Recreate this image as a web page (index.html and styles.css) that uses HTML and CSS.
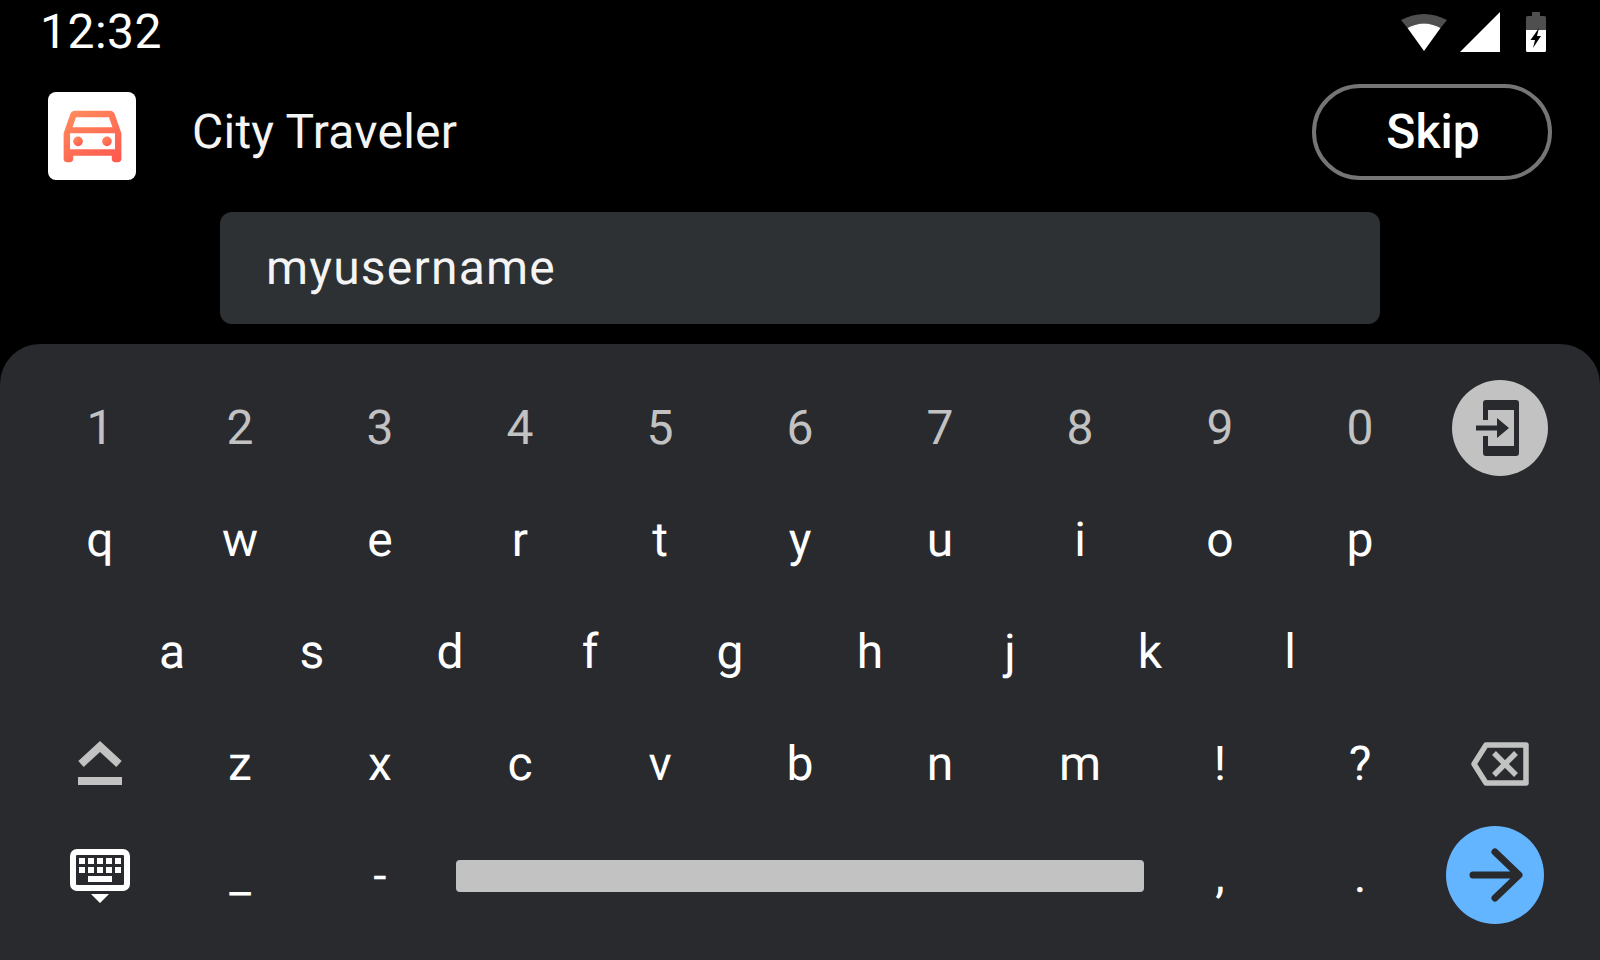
FILE: index.html
```html
<!DOCTYPE html>
<html lang="en">
<head>
    <meta charset="UTF-8">
    <title>City Traveler</title>
    <link rel="stylesheet" href="styles.css">
</head>
<body>
    <main class="screen">
        <div class="status">
            <span class="clock">12:32</span>
            <div class="status_icons">
                <svg class="wifi" width="46" height="38" viewBox="0 0 46 38">
                    <path fill="#4f4f4f" d="M0 6Q23 -6 46 6L39.5 14Q23 5 6.5 14Z"/>
                    <path fill="#fff" d="M6.5 14Q23 5 39.5 14L23 37Z"/>
                </svg>
                <svg class="signal" width="40" height="40" viewBox="0 0 40 40">
                    <path fill="#fff" d="M0 40L40 0V40Z"/>
                </svg>
                <svg class="battery" width="20" height="40" viewBox="0 0 20 40">
                    <path fill="#4f4f4f" d="M6 0H14V4H18.500Q20 4 20 5.500V18H0V5.500Q0 4 1.500 4H6Z"/>
                    <path fill="#fff" d="M0 18H20V38.500Q20 40 18.500 40H1.500Q0 40 0 38.500Z"/>
                    <path fill="#000" d="M13 16L4.500 28H9L7 36L15 24H11Z"/>
                </svg>
            </div>
        </div>

        <div class="appbar">
            <div class="app_icon">
                <svg width="77" height="77" viewBox="0 1 24 24">
                    <defs>
                        <linearGradient id="car_grad" x1="0.2" y1="0" x2="0.8" y2="1">
                            <stop offset="0" stop-color="#ff8a5c"/>
                            <stop offset="1" stop-color="#ff5a4f"/>
                        </linearGradient>
                    </defs>
                    <path fill="url(#car_grad)" d="M18.920 6.010C18.720 5.420 18.160 5 17.500 5h-11c-.66 0-1.210.42-1.420 1.010L3 12v8c0 .55.45 1 1 1h1c.55 0 1-.45 1-1v-1h12v1c0 .55.45 1 1 1h1c.55 0 1-.45 1-1v-8l-2.080-5.990zM6.850 7h10.290l1.080 3.110H5.770L6.850 7zM19 17H5v-5h14v5z"/>
                    <circle fill="url(#car_grad)" cx="7.500" cy="14.500" r="1.500"/>
                    <circle fill="url(#car_grad)" cx="16.500" cy="14.500" r="1.500"/>
                </svg>
            </div>
            <span class="app_name">City Traveler</span>
            <button class="skip">Skip</button>
        </div>

        <div class="field">myusername</div>

        <div class="keyboard">
            <div class="row numbers">
                <span class="key">1</span><span class="key">2</span><span class="key">3</span><span class="key">4</span><span class="key">5</span>
                <span class="key">6</span><span class="key">7</span><span class="key">8</span><span class="key">9</span><span class="key">0</span>
                <span class="key">
                    <svg class="enter" width="96" height="96" viewBox="0 0 96 96">
                        <circle cx="48" cy="48" r="48" fill="#c2c2c2"/>
                        <path fill="#292a2e" d="M31 40V23a3 3 0 0 1 3-3H64a3 3 0 0 1 3 3V73a3 3 0 0 1-3 3H34a3 3 0 0 1-3-3V56H36V66H62V30H36V40Z"/>
                        <path fill="#292a2e" d="M24 45.500H45V38L57 48L45 58V50.500H24Z"/>
                    </svg>
                </span>
            </div>
            <div class="row">
                <span class="key">q</span><span class="key">w</span><span class="key">e</span><span class="key">r</span><span class="key">t</span>
                <span class="key">y</span><span class="key">u</span><span class="key">i</span><span class="key">o</span><span class="key">p</span>
            </div>
            <div class="row home">
                <span class="key nudge">a</span><span class="key nudge">s</span><span class="key">d</span><span class="key">f</span><span class="key">g</span>
                <span class="key">h</span><span class="key">j</span><span class="key">k</span><span class="key">l</span>
            </div>
            <div class="row">
                <span class="key">
                    <svg width="44" height="46" viewBox="0 0 44 46">
                        <path fill="none" stroke="#c2c2c2" stroke-width="8" d="M3 24L22 6.500L41 24"/>
                        <rect x="0" y="37" width="44" height="8" fill="#c2c2c2"/>
                    </svg>
                </span>
                <span class="key">z</span><span class="key">x</span><span class="key">c</span><span class="key">v</span><span class="key">b</span>
                <span class="key">n</span><span class="key">m</span><span class="key">!</span><span class="key">?</span>
                <span class="key">
                    <svg class="backspace" width="58" height="44" viewBox="0 0 58 44">
                        <path fill="none" stroke="#c2c2c2" stroke-width="5.500" stroke-linejoin="round" d="M15 3H55V41H15L3 22Z"/>
                        <path fill="none" stroke="#c2c2c2" stroke-width="5.500" d="M23 11L45 33M45 11L23 33"/>
                    </svg>
                </span>
            </div>
            <div class="row">
                <span class="key">
                    <svg class="kb_icon" width="60" height="56" viewBox="0 0 60 56">
                        <rect x="3" y="3" width="54" height="36" rx="4" fill="none" stroke="#fff" stroke-width="6"/>
                        <path fill="#fff" d="M9 9h6v6H9zM18 9h6v6h-6zM27 9h6v6h-6zM36 9h6v6h-6zM45 9h6v6h-6zM9 18h6v6H9zM18 18h6v6h-6zM27 18h6v6h-6zM36 18h6v6h-6zM45 18h6v6h-6zM18 27h24v6H18zM21 45h18l-9 9z"/>
                    </svg>
                </span>
                <span class="key">_</span><span class="key">-</span>
                <span class="key space"><span class="space_bar"></span></span>
                <span class="key">,</span><span class="key">.</span>
                <span class="key go">
                    <svg width="98" height="98" viewBox="0 0 98 98">
                        <circle cx="49" cy="49" r="49" fill="#64b5ff"/>
                        <path fill="none" stroke="#292a2e" stroke-width="7" stroke-linecap="round" stroke-linejoin="round" d="M27 49H72M49 26L73 49L49 72"/>
                    </svg>
                </span>
            </div>
        </div>
    </main>
</body>
</html>
```

FILE: styles.css
```css
*,
*::before,
*::after{
    padding: 0;
    margin: 0;
    box-sizing: border-box;
}

body{
    background: #000;
    font-family: Roboto, sans-serif;
    color: #fff;
    overflow: hidden;
    text-rendering: geometricPrecision;
}

.screen{
    display: flex;
    flex-direction: column;
    height: 960px;
}

.status{
    display: flex;
    justify-content: space-between;
    height: 84px;
    padding: 12px 54px 0 40px;
}
.clock{
    margin-top: 1px;
    font-size: 48px;
    line-height: 38px;
    letter-spacing: .5px;
}
.status_icons{
    display: flex;
    align-items: flex-start;
}
.wifi{
    margin-top: 2px;
    margin-right: 13px;
}
.signal{
    margin-right: 26px;
}

.appbar{
    display: flex;
    align-items: flex-end;
    height: 96px;
    padding: 0 48px;
}
.app_icon{
    display: flex;
    align-items: center;
    justify-content: center;
    width: 88px;
    height: 88px;
    border-radius: 8px;
    background: #fff;
}
.app_name{
    flex-grow: 1;
    margin-left: 56px;
    margin-bottom: 18px;
    font-size: 48px;
    line-height: 60px;
    letter-spacing: .25px;
    color: #f4f4f4;
}
.skip{
    width: 240px;
    height: 96px;
    padding: 0 0 2px 2px;
    border: 4px solid #757575;
    border-radius: 48px;
    background: transparent;
    color: #fff;
    font: 500 48px Roboto, sans-serif;
    text-rendering: geometricPrecision;
}

.field{
    width: 1160px;
    height: 112px;
    margin: 32px auto 20px;
    padding-left: 46px;
    border-radius: 12px;
    background: #2e3134;
    font-size: 48px;
    line-height: 112px;
    letter-spacing: 1.2px;
    color: #f4f4f4;
}

.keyboard{
    flex-grow: 1;
    padding: 27px 0 0 30px;
    border-radius: 40px 40px 0 0;
    background: #292a2e;
}

.row{
    display: flex;
    height: 112px;
}
.row.home{
    padding-left: 70px;
}

.key{
    display: flex;
    align-items: center;
    justify-content: center;
    flex: none;
    width: 140px;
    font-size: 48px;
    color: #fff;
}
.key.nudge{
    padding-left: 4px;
}
.numbers .key{
    color: #c2c2c2;
}
.key.space{
    width: 700px;
}
.space_bar{
    width: 688px;
    height: 32px;
    margin-top: 2px;
    border-radius: 4px;
    background: #c2c2c2;
}
.key.go{
    margin-left: -5px;
}
.enter{
    margin-top: 2px;
}
.backspace{
    margin-top: 2px;
}
.kb_icon{
    margin-top: 4px;
}
```
